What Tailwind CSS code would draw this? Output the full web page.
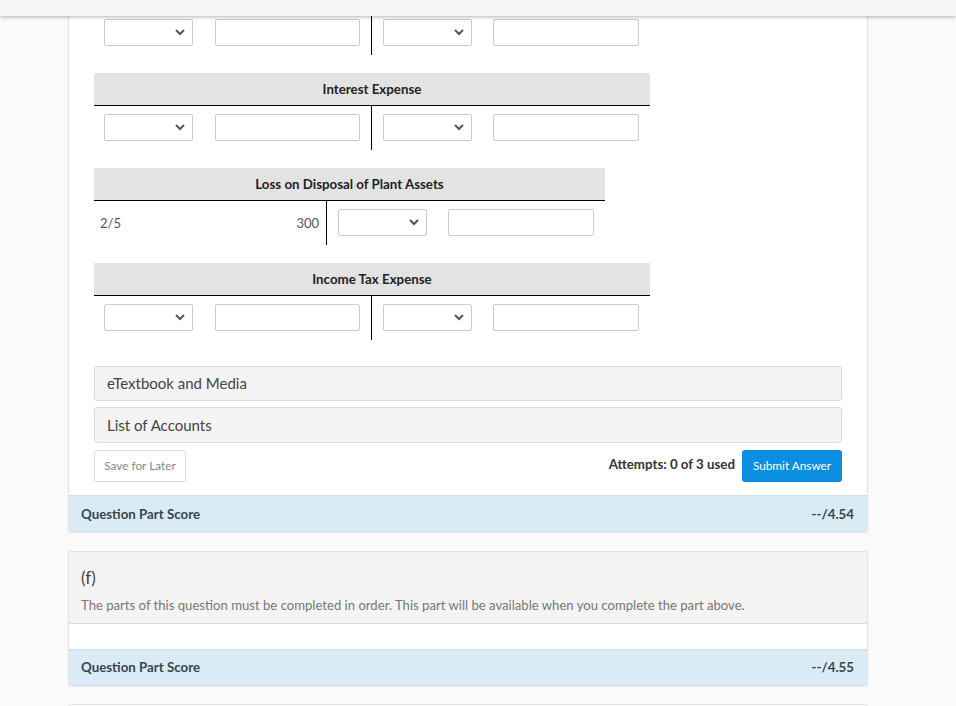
<!DOCTYPE html>
<html lang="en">
<head>
  <meta charset="UTF-8" />
  <title>Question</title>
  <script src="https://cdn.jsdelivr.net/npm/@tailwindcss/browser@4"></script>
</head>
<body class="bg-[#fafafa] h-[706px] overflow-hidden font-['Lato','Open_Sans',sans-serif] text-[#333]">
  <header class="relative z-10 h-4 bg-[#f5f5f5] shadow-[0_1px_4px_rgba(0,0,0,0.3)]"></header>

  <main class="ml-[68px] w-[800px]">
    <!-- part (e) -->
    <section class="bg-white border-x border-[#e2e2e2] rounded-b-[3px] shadow-[0_1px_1px_rgba(0,0,0,0.08)]">
      <div class="pl-[25px] pr-[25px]">
        <!-- cut off by the header -->
        <div class="w-[556px] h-[39px] flex overflow-hidden">
          <div class="w-[278px] h-[39px] flex items-start pt-[3px] pl-[10px] border-r border-black">
            <div class="w-[89px] h-[27px] border border-[#ccc] rounded-[2px] flex items-center justify-end pr-[7px]">
              <svg class="w-[10px] h-[7px]" viewBox="0 0 10 7" fill="none" stroke="#555" stroke-width="2"><path d="M1 1l4 4 4-4"/></svg>
            </div>
            <div class="ml-[22px] w-[145px] h-[27px] border border-[#ccc] rounded-[2px]"></div>
          </div>
          <div class="flex items-start pt-[3px] pl-[11px]">
            <div class="w-[89px] h-[27px] border border-[#ccc] rounded-[2px] flex items-center justify-end pr-[7px]">
              <svg class="w-[10px] h-[7px]" viewBox="0 0 10 7" fill="none" stroke="#555" stroke-width="2"><path d="M1 1l4 4 4-4"/></svg>
            </div>
            <div class="ml-[21px] w-[146px] h-[27px] border border-[#ccc] rounded-[2px]"></div>
          </div>
        </div>

        <div class="mt-[18px] w-[556px]">
          <div class="h-[33px] pt-px bg-[#e3e3e3] border-b border-black flex items-center justify-center text-[13.3px] font-bold text-[#222]">Interest Expense</div>
          <div class="flex h-[44px]">
            <div class="w-[278px] flex items-start pt-[8px] pl-[10px] border-r border-black">
              <div class="w-[89px] h-[27px] border border-[#ccc] rounded-[2px] flex items-center justify-end pr-[7px]">
                <svg class="w-[10px] h-[7px]" viewBox="0 0 10 7" fill="none" stroke="#555" stroke-width="2"><path d="M1 1l4 4 4-4"/></svg>
              </div>
              <div class="ml-[22px] w-[145px] h-[27px] border border-[#ccc] rounded-[2px]"></div>
            </div>
            <div class="flex items-start pt-[8px] pl-[11px]">
              <div class="w-[89px] h-[27px] border border-[#ccc] rounded-[2px] flex items-center justify-end pr-[7px]">
                <svg class="w-[10px] h-[7px]" viewBox="0 0 10 7" fill="none" stroke="#555" stroke-width="2"><path d="M1 1l4 4 4-4"/></svg>
              </div>
              <div class="ml-[21px] w-[146px] h-[27px] border border-[#ccc] rounded-[2px]"></div>
            </div>
          </div>
        </div>

        <div class="mt-[18px] w-[511px]">
          <div class="h-[33px] pt-px bg-[#e3e3e3] border-b border-black flex items-center justify-center text-[13.3px] font-bold text-[#222]">Loss on Disposal of Plant Assets</div>
          <div class="flex h-[44px]">
            <div class="w-[233px] flex items-start justify-between pt-[13px] pl-[6px] pr-[7px] border-r border-black text-[13px] leading-[18px] text-[#555]">
              <span>2/5</span>
              <span>300</span>
            </div>
            <div class="flex items-start pt-[8px] pl-[11px]">
              <div class="w-[89px] h-[27px] border border-[#ccc] rounded-[2px] flex items-center justify-end pr-[7px]">
                <svg class="w-[10px] h-[7px]" viewBox="0 0 10 7" fill="none" stroke="#555" stroke-width="2"><path d="M1 1l4 4 4-4"/></svg>
              </div>
              <div class="ml-[21px] w-[146px] h-[27px] border border-[#ccc] rounded-[2px]"></div>
            </div>
          </div>
        </div>

        <div class="mt-[18px] w-[556px]">
          <div class="h-[33px] pt-px bg-[#e3e3e3] border-b border-black flex items-center justify-center text-[13.3px] font-bold text-[#222]">Income Tax Expense</div>
          <div class="flex h-[44px]">
            <div class="w-[278px] flex items-start pt-[8px] pl-[10px] border-r border-black">
              <div class="w-[89px] h-[27px] border border-[#ccc] rounded-[2px] flex items-center justify-end pr-[7px]">
                <svg class="w-[10px] h-[7px]" viewBox="0 0 10 7" fill="none" stroke="#555" stroke-width="2"><path d="M1 1l4 4 4-4"/></svg>
              </div>
              <div class="ml-[22px] w-[145px] h-[27px] border border-[#ccc] rounded-[2px]"></div>
            </div>
            <div class="flex items-start pt-[8px] pl-[11px]">
              <div class="w-[89px] h-[27px] border border-[#ccc] rounded-[2px] flex items-center justify-end pr-[7px]">
                <svg class="w-[10px] h-[7px]" viewBox="0 0 10 7" fill="none" stroke="#555" stroke-width="2"><path d="M1 1l4 4 4-4"/></svg>
              </div>
              <div class="ml-[21px] w-[146px] h-[27px] border border-[#ccc] rounded-[2px]"></div>
            </div>
          </div>
        </div>

        <div class="mt-[26px] h-[35px] pb-px bg-[#f4f4f4] border border-[#ddd] rounded-[3px] flex items-center pl-3 text-[15px] text-[#444]">eTextbook and Media</div>
        <div class="mt-[6px] h-[36px] bg-[#f4f4f4] border border-[#ddd] rounded-[3px] flex items-center pl-3 text-[15px] text-[#444]">List of Accounts</div>

        <div class="mt-[7px] h-[32px] flex items-center justify-between">
          <button class="w-[92px] h-[32px] bg-white border border-[#ddd] rounded-[3px] text-[11.8px] text-[#888]">Save for Later</button>
          <div class="flex items-center">
            <span class="text-[13.3px] font-bold text-[#333] mr-[7px] -mt-[3px]">Attempts: 0 of 3 used</span>
            <button class="w-[100px] h-[32px] bg-[#0b8ee0] rounded-[3px] text-[11.8px] text-white">Submit Answer</button>
          </div>
        </div>
      </div>
      <div class="mt-[13px] h-[37px] pt-[2px] bg-[#d9ecf6] border-y border-[#d5dde2] flex items-center justify-between pl-3 pr-[13px] text-[13.3px] font-bold text-[#3a444c] rounded-b-[3px]">
        <span>Question Part Score</span>
        <span>--/4.54</span>
      </div>
    </section>

    <!-- part (f) -->
    <section class="mt-[19px] bg-white border-x border-t border-[#e2e2e2] rounded-[3px] shadow-[0_1px_1px_rgba(0,0,0,0.08)]">
      <div class="h-[72px] bg-[#f4f4f4] border-b border-[#ddd] px-3 pt-4 rounded-t-[3px]">
        <div class="text-[17px] leading-5 text-[#444]">(f)</div>
        <p class="mt-[8px] text-[13.12px] leading-[18px] text-[#777]">The parts of this question must be completed in order. This part will be available when you complete the part above.</p>
      </div>
      <div class="h-[25px]"></div>
      <div class="h-[37px] bg-[#d9ecf6] border-y border-[#d5dde2] flex items-center justify-between pl-3 pr-[13px] text-[13.3px] font-bold text-[#3a444c] rounded-b-[3px]">
        <span>Question Part Score</span>
        <span>--/4.55</span>
      </div>
    </section>

    <section class="mt-[18px] h-8 bg-white border-x border-t border-[#e2e2e2] rounded-t-[3px]"></section>
  </main>
</body>
</html>
